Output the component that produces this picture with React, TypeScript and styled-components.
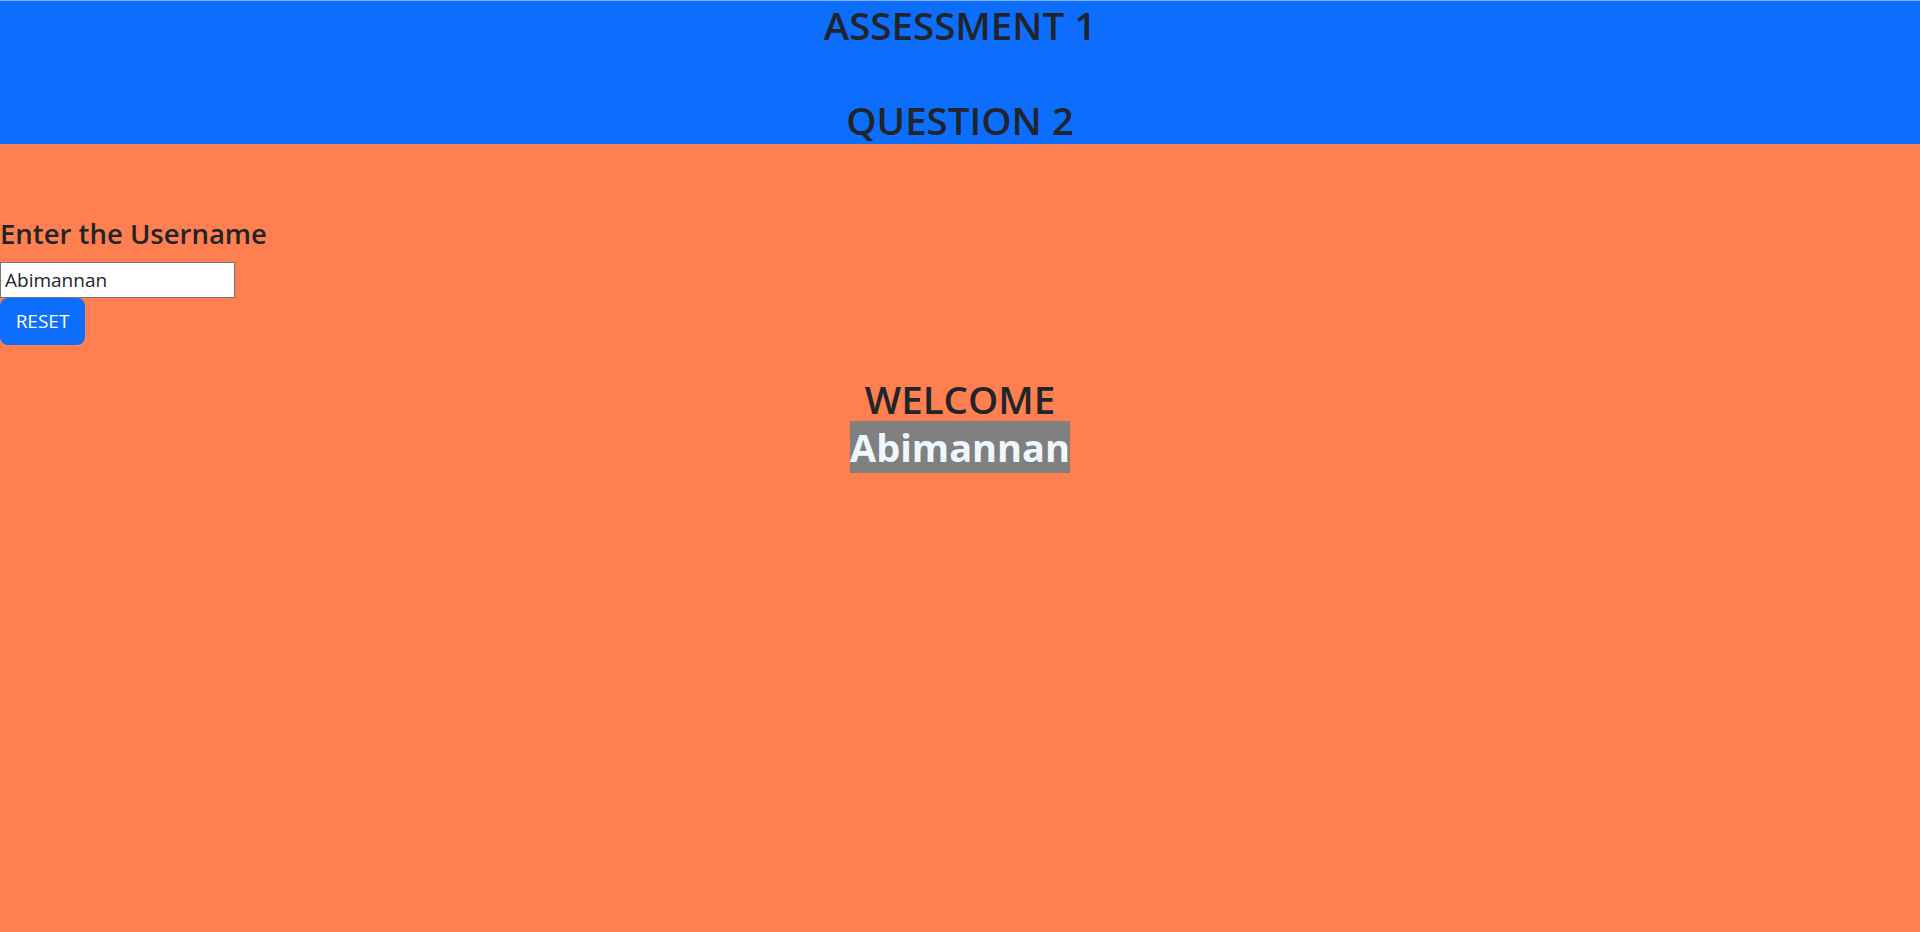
import React, { useState } from "react";
import styled, { createGlobalStyle } from "styled-components";

const GlobalStyle = createGlobalStyle`
  html, body {
    margin: 0;
    padding: 0;
    background: #ff7f50;
    font-family: "Open Sans", "Noto Sans", sans-serif;
    color: #212529;
  }
  * { box-sizing: border-box; }
`;

const Page = styled.div`
  min-height: 932px;
  background: #ff7f50;
  display: flex;
  flex-direction: column;
`;

const Header = styled.header`
  background: #0d6efd;
  border-top: 1px solid #7fb1f7;
  height: 144px;
  display: flex;
  flex-direction: column;
  align-items: center;
  gap: 47px;
`;

const HeaderTitle = styled.h1`
  margin: 0;
  font-size: 38.5px;
  font-weight: 600;
  line-height: 48px;
  color: #212529;
  text-align: center;
`;

const Main = styled.main`
  display: flex;
  flex-direction: column;
  align-items: flex-start;
  padding-top: 73px;
`;

const Label = styled.h3`
  margin: 0 0 11px 0;
  font-size: 27.5px;
  font-weight: 600;
  line-height: 34px;
  color: #212529;
`;

const Input = styled.input`
  width: 235px;
  height: 36px;
  margin: 0;
  padding: 1px 4px;
  border: 1px solid #767676;
  background: #fff;
  font-family: "Open Sans", "Noto Sans", sans-serif;
  font-size: 19px;
  color: #212529;
  outline: none;
`;

const Button = styled.button`
  height: 47px;
  width: 85px;
  padding: 0;
  margin: 0;
  border: none;
  border-radius: 8px;
  background: #0d6efd;
  color: #fff;
  font-family: "Open Sans", "Noto Sans", sans-serif;
  font-size: 19px;
  line-height: 47px;
  text-align: center;
  cursor: pointer;
`;

const Welcome = styled.h1`
  align-self: stretch;
  margin: 30px 0 0 0;
  font-size: 38.5px;
  font-weight: 600;
  line-height: 48px;
  text-align: center;
  color: #212529;
`;

const NameTag = styled.span`
  background: #808080;
  color: #f0f8ff;
  font-weight: 700;
  font-size: 38px;
`;

export default function App() {
  const [name, setName] = useState("Abimannan");
  return (
    <>
      <GlobalStyle />
      <Page>
        <Header>
          <HeaderTitle>ASSESSMENT 1</HeaderTitle>
          <HeaderTitle>QUESTION 2</HeaderTitle>
        </Header>
        <Main>
          <Label>Enter the Username</Label>
          <Input value={name} onChange={(e) => setName(e.target.value)} />
          <Button onClick={() => setName("")}>RESET</Button>
          <Welcome>
            WELCOME
            <br />
            <NameTag>{name}</NameTag>
          </Welcome>
        </Main>
      </Page>
    </>
  );
}
